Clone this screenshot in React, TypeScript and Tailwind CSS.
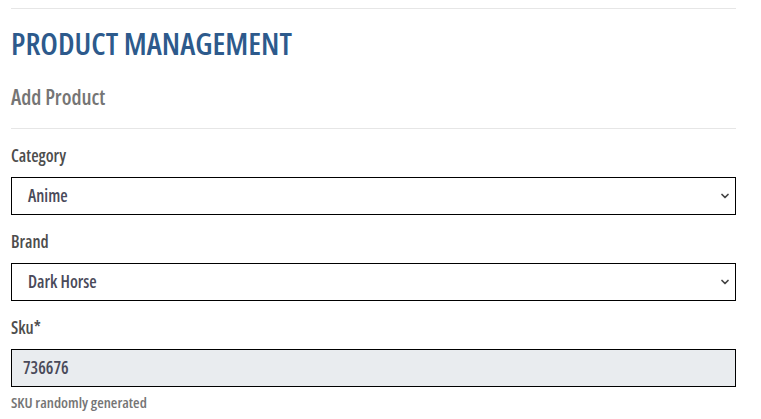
import { ChevronDown } from "lucide-react";

const font = { fontFamily: '"Open Sans", "Liberation Sans", sans-serif' };

function SelectField({ label, value }: { label: string; value: string }) {
  return (
    <div className="mb-[16px]">
      <label className="block text-[17px] leading-[22px] font-semibold text-[#4d4d4d] mb-[10px]">{label}</label>
      <div className="relative h-[38px] border border-black bg-white flex items-center pl-[16px] pr-[12px]">
        <span className="text-[17px] font-semibold text-[#4a4a5a]">{value}</span>
        <ChevronDown className="absolute right-[4px] top-1/2 -translate-y-1/2 text-[#444]" size={12} strokeWidth={3.5} />
      </div>
    </div>
  );
}

export default function App() {
  return (
    <div className="min-h-screen bg-white font-stretch-condensed" style={font}>
      <div className="pl-[11px] pr-[25px] pt-[8px]">
        <hr className="border-t border-[#e6e6e6]" />
        <h1 className="mt-[12px] text-[31px] leading-[44px] font-semibold text-[#2d5a8c]">
          PRODUCT MANAGEMENT
        </h1>
        <h2 className="mt-[18px] text-[21px] leading-[28px] font-semibold text-[#757575]">Add Product</h2>
        <hr className="mt-[17px] border-t border-[#e6e6e6]" />
        <div className="mt-[16px]">
          <SelectField label="Category" value="Anime" />
          <SelectField label="Brand" value="Dark Horse" />
          <div>
            <label className="block text-[17px] leading-[22px] font-semibold text-[#4d4d4d] mb-[10px]">Sku*</label>
            <div className="h-[38px] border border-black bg-[#e9ecef] flex items-center pl-[11px]">
              <span className="text-[17px] font-semibold text-[#4a4a5a]">736676</span>
            </div>
            <p className="mt-[6px] text-[15px] leading-[18px] font-semibold text-[#757575]">SKU randomly generated</p>
          </div>
        </div>
      </div>
    </div>
  );
}
